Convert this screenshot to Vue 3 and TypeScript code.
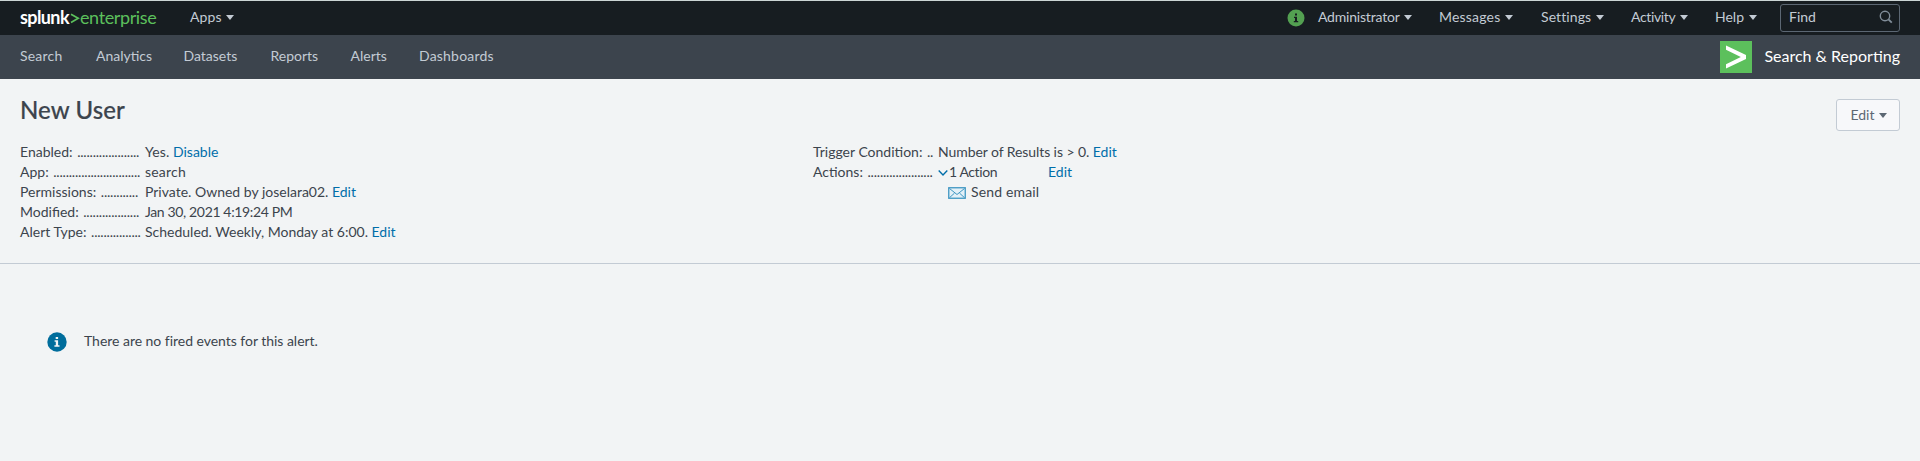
<script setup lang="ts">
interface Item {
  label: string
  cls: string
}
interface Detail {
  term: string
  dots: number
  value: string
  link?: string
  cls: string
}

const sections: Item[] = [
  { label: 'Search', cls: 'wide' },
  { label: 'Analytics', cls: 'even' },
  { label: 'Datasets', cls: 'even' },
  { label: 'Reports', cls: 'even' },
  { label: 'Alerts', cls: 'even' },
  { label: 'Dashboards', cls: 'wide' },
]

const menus: Item[] = [
  { label: 'Administrator', cls: 'snug' },
  { label: 'Messages', cls: 'wide' },
  { label: 'Settings', cls: 'slack' },
  { label: 'Activity', cls: 'tight' },
  { label: 'Help', cls: 'even' },
]

const details: Detail[] = [
  { term: 'Enabled:', dots: 20, value: 'Yes.', link: 'Disable', cls: 'slack' },
  { term: 'App:', dots: 28, value: 'search', cls: 'wide' },
  { term: 'Permissions:', dots: 12, value: 'Private. Owned by joselara02.', link: 'Edit', cls: 'even' },
  { term: 'Modified:', dots: 18, value: 'Jan 30, 2021 4:19:24 PM', cls: 'tight' },
  { term: 'Alert Type:', dots: 16, value: 'Scheduled. Weekly, Monday at 6:00.', link: 'Edit', cls: 'even' },
]

const leader = (count: number): string => '.'.repeat(count)
</script>

<template>
  <div class="page">
    <header class="topbar">
      <a class="logo">
        <span class="brand">splunk</span>
        <svg class="prompt" width="10" height="11" viewBox="0 0 10 11">
          <path d="M1 1.2 8.2 5.3 1 9.4" fill="none" stroke="#5cc05c" stroke-width="1.7" />
        </svg>
        <span class="edition">enterprise</span>
      </a>
      <a class="menu apps slack">Apps<i class="caret"></i></a>
      <div class="right">
        <svg class="health" width="18" height="18" viewBox="0 0 18 18">
          <circle cx="9" cy="9" r="8.5" fill="#53a051" />
          <path d="M8 4.6h2v1.8H8zM7 7.7h3v4.2h1.2v1.3H6.8v-1.3H8V9H7z" fill="#171d21" />
        </svg>
        <nav class="menus">
          <a v-for="m in menus" :key="m.label" class="menu" :class="m.cls">{{ m.label }}<i class="caret"></i></a>
        </nav>
        <div class="find">
          <span>Find</span>
          <svg width="14" height="14" viewBox="0 0 14 14">
            <circle cx="6" cy="6" r="4.7" fill="none" stroke="#818d99" stroke-width="1.4" />
            <path d="m9.4 9.4 3.4 3.2" stroke="#818d99" stroke-width="1.9" />
          </svg>
        </div>
      </div>
    </header>

    <div class="appbar">
      <nav class="sections">
        <a v-for="s in sections" :key="s.label" :class="s.cls">{{ s.label }}</a>
      </nav>
      <div class="app">
        <svg width="32" height="32" viewBox="0 0 32 32">
          <rect width="32" height="32" fill="#5cc05c" />
          <path d="M6 4.6 26 14v4L6 27.4v-4.2L20.8 16 6 8.8z" fill="#fff" />
        </svg>
        <span>Search &amp; Reporting</span>
      </div>
    </div>

    <section class="summary">
      <div class="heading">
        <h1>New User</h1>
        <button type="button" class="edit">Edit<i class="caret"></i></button>
      </div>
      <div class="columns">
        <dl>
          <div v-for="d in details" :key="d.term" class="row">
            <dt>{{ d.term }} <span class="dots">{{ leader(d.dots) }}</span></dt>
            <dd><span :class="d.cls">{{ d.value }}</span><template v-if="d.link">{{ ' ' }}<a>{{ d.link }}</a></template></dd>
          </div>
        </dl>
        <dl>
          <div class="row">
            <dt>Trigger Condition: <span class="dots">{{ leader(2) }}</span></dt>
            <dd><span class="close">Number of Results is &gt; 0.</span> <a>Edit</a></dd>
          </div>
          <div class="row">
            <dt>Actions: <span class="dots">{{ leader(21) }}</span></dt>
            <dd class="actions">
              <svg width="10" height="8" viewBox="0 0 10 8">
                <path d="M.7 1.6 5 5.9l4.3-4.3" fill="none" stroke="#006eaa" stroke-width="1.4" />
              </svg>
              <span class="count">1 Action</span>
              <a>Edit</a>
            </dd>
          </div>
          <div class="email">
            <svg width="18" height="12" viewBox="0 0 18 12">
              <rect x=".75" y=".75" width="16.5" height="10.5" fill="#e3f0f7" stroke="#3f97c3" stroke-width="1.3" />
              <path d="m1.5 1.5 7.5 6 7.5-6M1.5 10.7l5-4.6M16.5 10.7l-5-4.6" fill="none" stroke="#3f97c3" />
            </svg>
            <span>Send email</span>
          </div>
        </dl>
      </div>
    </section>

    <div class="notice">
      <svg width="20" height="20" viewBox="0 0 20 20">
        <circle cx="10" cy="10" r="9.7" fill="#006d9c" />
        <path d="M8.7 5h2.4v2.1H8.7zM7.6 8.3h3.5v4.9h1.4v1.5H7.4v-1.5h1.4V9.8H7.6z" fill="#f2f4f5" />
      </svg>
      <p>There are no fired events for this alert.</p>
    </div>
  </div>
</template>

<style>
html,
body {
  margin: 0;
  background: #f2f4f5;
}
</style>

<style scoped>
.page {
  height: 461px;
  overflow: hidden;
  box-sizing: border-box;
  border-top: 1px solid #ccd5d5;
  background: #f2f4f5;
  color: #3c444d;
  font: 14px/20px Lato, 'Open Sans', sans-serif;
  white-space: nowrap;
}

svg {
  display: block;
  flex: none;
}

.wide { letter-spacing: 0.2px; }
.slack { letter-spacing: 0.1px; }
.even { letter-spacing: 0; }
.close { letter-spacing: -0.08px; }
.snug { letter-spacing: -0.2px; }
.tight { letter-spacing: -0.36px; }

.topbar {
  display: flex;
  align-items: center;
  height: 34px;
  padding: 0 20px;
  background: #171d21;
  color: #c3cbd4;
}

.logo {
  display: flex;
  align-items: center;
  width: 170px;
  padding-bottom: 2px;
  font-size: 18px;
}

.brand {
  width: 50px;
  color: #fff;
  font-weight: 700;
  letter-spacing: -0.6px;
}

.prompt {
  margin-top: 2px;
}

.edition {
  color: #5cc05c;
  letter-spacing: -0.38px;
}

.menu {
  display: flex;
  align-items: center;
  padding-bottom: 2px;
}

.caret {
  margin: 1px 0 0 4.5px;
  border: solid transparent;
  border-width: 5.5px 4px 0;
  border-top-color: currentColor;
}

.right {
  display: flex;
  align-items: center;
  margin-left: auto;
}

.health {
  margin: 0 13px 0 0;
}

.menus {
  display: grid;
  grid-template-columns: 121px 102px 90px 84px 65px;
}

.find {
  display: flex;
  align-items: center;
  justify-content: space-between;
  box-sizing: border-box;
  width: 120px;
  height: 28px;
  padding: 0 6px 0 8px;
  border: 1px solid #5c6773;
  border-radius: 3px;
}

.find span {
  padding-bottom: 2px;
}

.find svg {
  margin-bottom: 2px;
}

.appbar {
  display: flex;
  align-items: center;
  justify-content: space-between;
  height: 44px;
  padding: 0 20px;
  background: #3c444d;
  color: #c3cbd4;
}

.sections {
  display: grid;
  grid-template-columns: 76px 87.5px 87px 80px 68.5px 80px;
  padding-bottom: 2px;
}

.app {
  display: flex;
  align-items: center;
  gap: 12px;
  color: #fff;
  font-size: 16px;
}

.app span {
  padding-bottom: 2px;
}

.summary {
  box-sizing: border-box;
  height: 185px;
  padding: 19px 20px 0;
  border-bottom: 1px solid #c3cbd4;
}

.heading {
  display: flex;
  align-items: flex-start;
  justify-content: space-between;
  height: 44px;
}

h1 {
  margin: 0;
  font-size: 24px;
  font-weight: 500;
  line-height: 24px;
  letter-spacing: 0.1px;
  -webkit-text-stroke: 0.2px currentColor;
}

.edit {
  display: flex;
  align-items: center;
  justify-content: center;
  box-sizing: border-box;
  width: 64px;
  height: 32px;
  margin-top: 1px;
  padding: 0 0 1px 1px;
  border: 1px solid #c3cbd4;
  border-radius: 3px;
  background: #f7f8fa;
  color: #5c6773;
  font: inherit;
}

.edit .caret {
  margin-left: 4px;
}

.columns {
  display: grid;
  grid-template-columns: 793px 1fr;
}

dl,
dd,
p {
  margin: 0;
}

.row {
  display: grid;
  grid-template-columns: 120px auto;
  justify-content: start;
  column-gap: 5px;
}

.dots {
  margin-left: 1px;
  letter-spacing: -0.2px;
}

a {
  cursor: pointer;
}

dd a {
  color: #006eaa;
}

.actions {
  display: flex;
  align-items: center;
}

.actions svg {
  margin-top: 2px;
}

.count {
  width: 99px;
  margin-left: 1px;
  letter-spacing: -0.4px;
}

.email {
  display: flex;
  align-items: center;
  gap: 5px;
  margin-left: 135px;
  letter-spacing: 0.15px;
}

.email svg {
  margin-top: 2px;
}

.notice {
  display: flex;
  align-items: center;
  gap: 17px;
  margin: 67px 0 0 47px;
}

.notice p {
  padding-bottom: 2px;
  letter-spacing: -0.03px;
}
</style>
